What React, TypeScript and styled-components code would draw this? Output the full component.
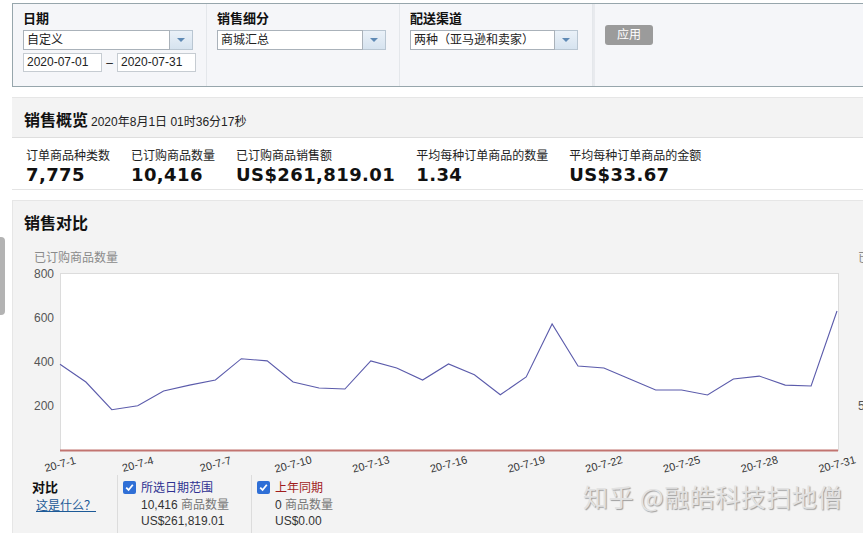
import styled, { createGlobalStyle } from 'styled-components';

const GlobalStyle = createGlobalStyle`
  html, body {
    margin: 0;
    padding: 0;
    background: #fff;
    overflow: hidden;
  }
  body {
    font-family: "Liberation Sans", "Noto Sans CJK SC", sans-serif;
    font-size: 12px;
    color: #222;
  }
`;

// 每日已订购商品数量 (2020-07-01 ~ 2020-07-31)
const daily = [
  390, 309, 183, 201, 268, 295, 318, 415, 405, 309, 282, 277, 405, 373, 318,
  391, 342, 251, 332, 573, 382, 373, 323, 273, 273, 250, 323, 336, 295, 291, 632,
];

const metrics = [
  { label: '订单商品种类数', value: '7,775' },
  { label: '已订购商品数量', value: '10,416' },
  { label: '已订购商品销售额', value: 'US$261,819.01' },
  { label: '平均每种订单商品的数量', value: '1.34' },
  { label: '平均每种订单商品的金额', value: 'US$33.67' },
];

const PLOT_LEFT = 47;
const PLOT_RIGHT = 825;
const PLOT_TOP = 39;
const ZERO_Y = 216;
const yOf = (v: number) => ZERO_Y - v * 0.22;
const xOf = (i: number) => PLOT_LEFT + (i * (PLOT_RIGHT - PLOT_LEFT - 1)) / 30;

const Chart = () => {
  const points = daily.map((v, i) => `${xOf(i)},${yOf(v)}`).join(' ');
  return (
    <ChartSvg width={850} height={241}>
      <text x={21} y={28} fill="#8a8a8a" fontSize={12}>
        已订购商品数量
      </text>
      <text x={845} y={28} fill="#8a8a8a" fontSize={12}>
        已订购商品销售额
      </text>
      <rect
        x={PLOT_LEFT + 0.5}
        y={PLOT_TOP + 0.5}
        width={PLOT_RIGHT - PLOT_LEFT}
        height={ZERO_Y - PLOT_TOP}
        fill="#fff"
        stroke="#dcdcdc"
      />
      {[800, 600, 400, 200].map((v) => (
        <text key={v} x={41} y={yOf(v) + 4} textAnchor="end" fill="#555" fontSize={12}>
          {v}
        </text>
      ))}
      <text x={845} y={yOf(200) + 4} fill="#555" fontSize={12}>
        5
      </text>
      <line x1={PLOT_LEFT} x2={PLOT_RIGHT} y1={ZERO_Y + 0.5} y2={ZERO_Y + 0.5} stroke="#c27470" strokeWidth={2} />
      <polyline points={points} fill="none" stroke="#5b5bab" strokeWidth={1.1} />
      {daily.map((_, i) =>
        i % 3 === 0 ? (
          <text
            key={i}
            x={xOf(i)}
            y={234}
            textAnchor="middle"
            fill="#333"
            fontSize={11}
            transform={`rotate(-15 ${xOf(i)} 230)`}
          >
            {`20-7-${i + 1}`}
          </text>
        ) : null,
      )}
    </ChartSvg>
  );
};

const Select = ({ text, width }: { text: string; width: number }) => (
  <SelectBox>
    <SelectText $width={width}>{text}</SelectText>
    <DropButton>
      <Arrow />
    </DropButton>
  </SelectBox>
);

const App = () => {
  return (
    <>
      <GlobalStyle />
      <SideTab />
      <Page>
        <FilterBar>
          <FilterCol $width={194}>
            <FilterLabel>日期</FilterLabel>
            <Select text="自定义" width={147} />
            <DateRow>
              <DateInput>2020-07-01</DateInput>
              <Dash>–</Dash>
              <DateInput>2020-07-31</DateInput>
            </DateRow>
          </FilterCol>
          <FilterCol $width={193}>
            <FilterLabel>销售细分</FilterLabel>
            <Select text="商城汇总" width={146} />
          </FilterCol>
          <FilterCol $width={193}>
            <FilterLabel>配送渠道</FilterLabel>
            <Select text="两种（亚马逊和卖家）" width={145} />
          </FilterCol>
          <ApplyCol>
            <ApplyButton>应用</ApplyButton>
          </ApplyCol>
        </FilterBar>

        <Overview>
          <PanelHeader>
            <PanelTitle>销售概览</PanelTitle>
            <Stamp>2020年8月1日 01时36分17秒</Stamp>
          </PanelHeader>
          <MetricRow>
            {metrics.map((m) => (
              <Metric key={m.label}>
                <MetricLabel>{m.label}</MetricLabel>
                <MetricValue>{m.value}</MetricValue>
              </Metric>
            ))}
          </MetricRow>
        </Overview>

        <Compare>
          <CompareTitle>销售对比</CompareTitle>
          <Chart />
          <Legend>
            <LegendHead>
              <LegendHeadTitle>对比</LegendHeadTitle>
              <HelpLink>这是什么？</HelpLink>
            </LegendHead>
            <LegendItem>
              <Check />
              <LegendText>
                <LegendName $color="#2e3192">所选日期范围</LegendName>
                <LegendLine>
                  <Num>10,416</Num> 商品数量
                </LegendLine>
                <LegendLine>
                  <Num>US$261,819.01</Num>
                </LegendLine>
              </LegendText>
            </LegendItem>
            <LegendItem>
              <Check />
              <LegendText>
                <LegendName $color="#a11d1d">上年同期</LegendName>
                <LegendLine>
                  <Num>0</Num> 商品数量
                </LegendLine>
                <LegendLine>
                  <Num>US$0.00</Num>
                </LegendLine>
              </LegendText>
            </LegendItem>
          </Legend>
          <Watermark>知乎 @融皓科技扫地僧</Watermark>
        </Compare>
      </Page>
    </>
  );
};

export default App;

const Check = () => (
  <CheckBox>
    <svg width="9" height="9" viewBox="0 0 9 9">
      <path d="M1.2 4.6 L3.6 7 L7.8 1.8" fill="none" stroke="#fff" strokeWidth="1.8" />
    </svg>
  </CheckBox>
);

const Page = styled.div`
  width: 900px;
  padding: 3px 0 0 12px;
`;

const SideTab = styled.div`
  position: absolute;
  left: 0;
  top: 237px;
  width: 5px;
  height: 78px;
  background: #b3b3b3;
  border-radius: 0 4px 4px 0;
`;

const FilterBar = styled.div`
  display: flex;
  height: 82px;
  border: 1px solid #97a6ac;
  border-right: none;
  background: #f5f6f9;
`;

const FilterCol = styled.div<{ $width: number }>`
  width: ${(p) => p.$width}px;
  padding: 7px 0 0 10px;
  box-sizing: border-box;
  border-right: 1px solid #e4e7eb;
`;

const ApplyCol = styled.div`
  flex: 1;
  padding: 21px 0 0 10px;
  border-left: 2px solid #e8eaee;
`;

const FilterLabel = styled.div`
  font-size: 13px;
  font-weight: bold;
  line-height: 16px;
  color: #111;
  margin-bottom: 3px;
`;

const SelectBox = styled.div`
  display: flex;
  height: 20px;
`;

const SelectText = styled.div<{ $width: number }>`
  width: ${(p) => p.$width}px;
  box-sizing: border-box;
  background: #fff;
  border: 1px solid #aab2ba;
  padding-left: 3px;
  line-height: 18px;
  font-size: 12px;
  color: #222;
  white-space: nowrap;
`;

const DropButton = styled.div`
  width: 23px;
  box-sizing: border-box;
  border: 1px solid #b9c6d2;
  border-left: none;
  background: linear-gradient(#eaf1f8, #d6e3ef);
  display: flex;
  align-items: center;
  justify-content: center;
`;

const Arrow = styled.div`
  width: 0;
  height: 0;
  border-left: 4px solid transparent;
  border-right: 4px solid transparent;
  border-top: 4px solid #5f8ab5;
`;

const DateRow = styled.div`
  display: flex;
  align-items: center;
  margin-top: 3px;
`;

const DateInput = styled.div`
  width: 79px;
  height: 19px;
  box-sizing: border-box;
  border: 1px solid #c6ccd2;
  background: #fff;
  padding-left: 3px;
  line-height: 17px;
  font-size: 12px;
`;

const Dash = styled.span`
  width: 15px;
  text-align: center;
  font-size: 12px;
`;

const ApplyButton = styled.div`
  width: 48px;
  height: 20px;
  border-radius: 3px;
  background: #9b9b9b;
  color: #fff;
  font-size: 12px;
  line-height: 20px;
  text-align: center;
`;

const Overview = styled.div`
  margin-top: 10px;
  border-top: 1px solid #e6e6e6;
  border-bottom: 1px solid #e4e4e4;
`;

const PanelHeader = styled.div`
  display: flex;
  align-items: baseline;
  height: 40px;
  box-sizing: border-box;
  padding: 13px 0 0 12px;
  background: #f3f3f3;
  border-bottom: 1px solid #dedede;
`;

const PanelTitle = styled.span`
  font-size: 16px;
  font-weight: bold;
  line-height: 20px;
  color: #111;
`;

const Stamp = styled.span`
  font-size: 12px;
  margin-left: 3px;
  color: #222;
`;

const MetricRow = styled.div`
  display: flex;
  gap: 21px;
  height: 51px;
  box-sizing: border-box;
  padding: 11px 0 0 14px;
  background: #fff;
`;

const Metric = styled.div`
  display: flex;
  flex-direction: column;
`;

const MetricLabel = styled.div`
  font-size: 12px;
  line-height: 14px;
  color: #222;
`;

const MetricValue = styled.div`
  margin-top: 2px;
  font-family: "DejaVu Sans", Verdana, sans-serif;
  font-size: 18px;
  font-weight: bold;
  line-height: 20px;
  letter-spacing: 0.4px;
  color: #111;
`;

const Compare = styled.div`
  position: relative;
  margin-top: 10px;
  height: 340px;
  background: #f3f3f3;
  border-top: 1px solid #e6e6e6;
  border-left: 1px solid #e6e6e6;
`;

const CompareTitle = styled.div`
  padding: 13px 0 0 11px;
  font-size: 16px;
  font-weight: bold;
  line-height: 20px;
  color: #111;
`;

const ChartSvg = styled.svg`
  display: block;
  font-family: "Liberation Sans", "Noto Sans CJK SC", sans-serif;
`;

const Legend = styled.div`
  display: flex;
`;

const LegendHead = styled.div`
  width: 104px;
  padding: 5px 0 0 19px;
  box-sizing: border-box;
`;

const LegendHeadTitle = styled.div`
  font-size: 13px;
  font-weight: bold;
  line-height: 16px;
  color: #111;
`;

const HelpLink = styled.a`
  display: block;
  margin: 3px 0 0 4px;
  font-size: 12px;
  line-height: 14px;
  color: #1d5a97;
  text-decoration: underline;
`;

const LegendItem = styled.div`
  display: flex;
  width: 134px;
  height: 60px;
  box-sizing: border-box;
  padding: 6px 0 0 5px;
  border-left: 1px solid #dcdcdc;
`;

const CheckBox = styled.div`
  width: 13px;
  height: 13px;
  margin-right: 5px;
  border-radius: 2px;
  background: #2f6fd6;
  display: flex;
  align-items: center;
  justify-content: center;
`;

const LegendText = styled.div`
  display: flex;
  flex-direction: column;
  font-size: 12px;
  line-height: 16.5px;
  margin-top: -1px;
`;

const LegendName = styled.div<{ $color: string }>`
  color: ${(p) => p.$color};
`;

const LegendLine = styled.div`
  color: #777;
`;

const Num = styled.span`
  color: #333;
`;

const Watermark = styled.div`
  position: absolute;
  left: 570px;
  top: 281px;
  font-family: "Noto Sans CJK SC", sans-serif;
  font-size: 25px;
  line-height: 28px;
  letter-spacing: 0.5px;
  color: #e2e2e2;
  text-shadow: 1px 1px 1px rgba(0, 0, 0, 0.35);
  white-space: nowrap;
`;
